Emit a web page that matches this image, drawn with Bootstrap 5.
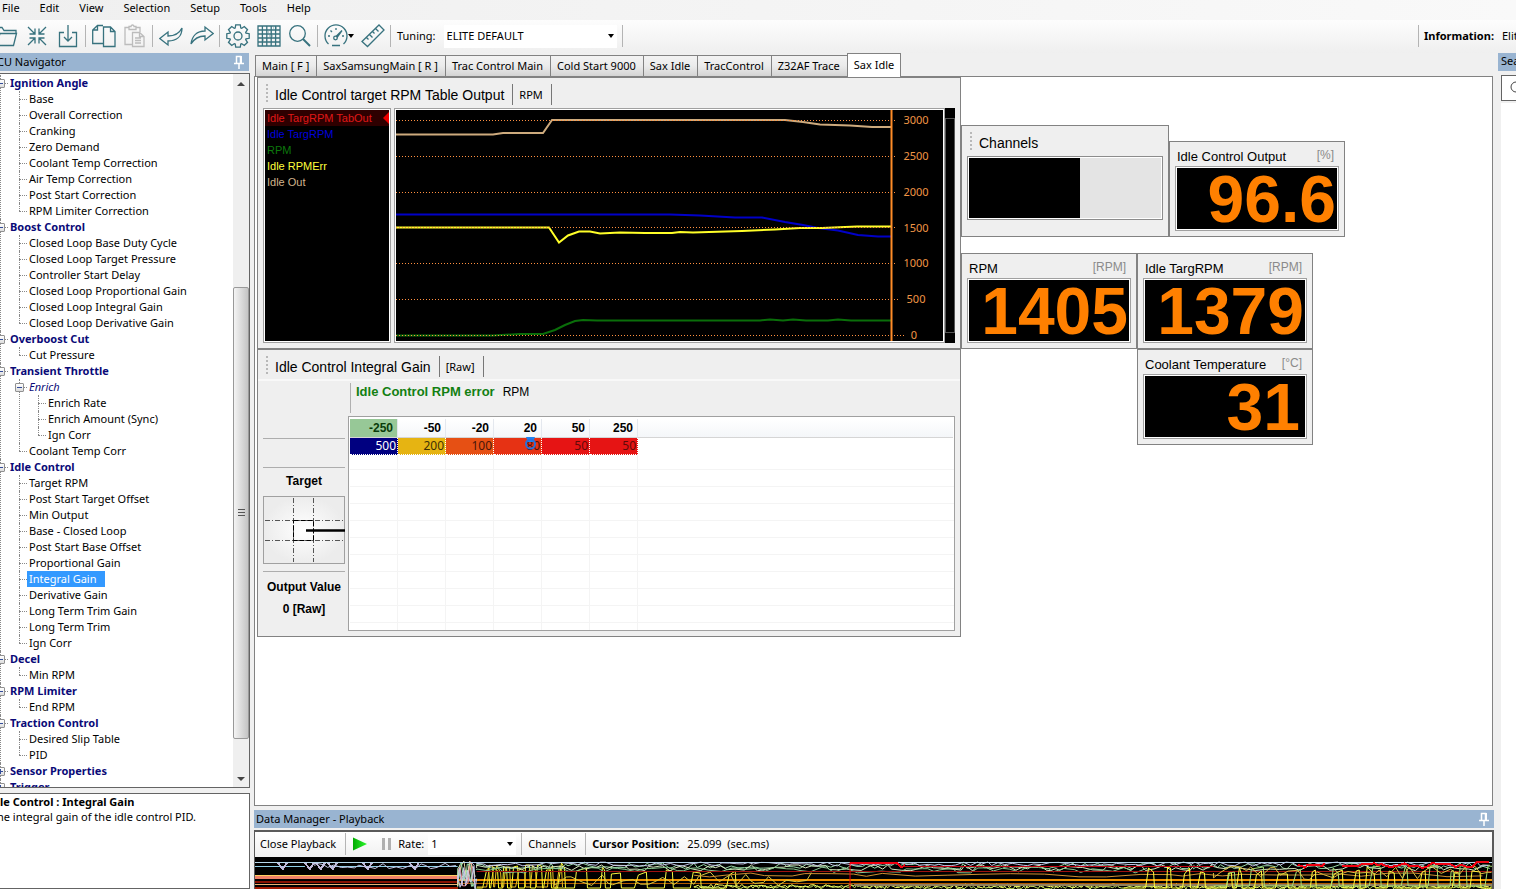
<!DOCTYPE html>
<html lang="en">
<head>
<meta charset="utf-8">
<meta name="viewport" content="width=device-width, initial-scale=1">
<title>ECU Tuning - Sax Idle</title>
<link rel="stylesheet" href="https://cdn.jsdelivr.net/npm/bootstrap@5.3.0/dist/css/bootstrap.min.css">
<style>
:root { --ui: "Noto Sans", "Open Sans", sans-serif; --gauge: "Liberation Sans", Arial, sans-serif; --edge: #828282; --face: #efefef; --teal: #37727e; --caption: #99b4d1; }
body { font: 11px/16px var(--ui); color: #000; background: #f0f0f0; height: 100vh; overflow: hidden; }
button, select, input { font: inherit; color: inherit; background: none; border: 0; padding: 0; border-radius: 0; appearance: none; }
a { color: inherit; text-decoration: none; }
svg { display: block; }
.ic { width: 24px; height: 24px; fill: none; stroke: var(--teal); stroke-width: 1.3; }
.menubar { height: 20px; gap: 20px; padding-left: 2px; line-height: 16px; background: linear-gradient(90deg, #efefef, #f9f9f9); }
.toolstrip { height: 33px; background: linear-gradient(#fdfdfd, #efefef); }
.main-tools { padding-bottom: 1px; }
.tool-group { gap: 7px; }
.tool-group:first-child { margin-left: -6px; }
.vsep { flex: none; width: 1px; height: 22px; background: #b4b4b4; margin: 0 6px 0 5px; }
.pick { background: #fff; position: relative; }
.pick select { width: 100%; height: 100%; padding-left: 3px; background: #fff; }
.pick::after, .caret { content: ""; border: 3px solid transparent; border-top: 4px solid #000; border-bottom: 0; }
.pick::after { position: absolute; right: 3px; top: 50%; margin-top: -2px; pointer-events: none; }
.info { width: 98px; white-space: nowrap; }
.info .vsep { margin: 0 5px 0 0; }
.info b, .info span { flex: none; }
.caption-bar { background: var(--caption); height: 18px; white-space: nowrap; }
.nav-col { width: 250px; }
.nav-col .caption-bar { margin-right: 1px; }
.crop-left { margin-left: -3px; }
.framed { background: #fff; border: 1px solid #646464; }
.nav-col .framed { border-left: 0; }
.tree-view ul { list-style: none; margin: 0 0 0 9px; padding: 0; }
.tree-view > ul { margin: 0 0 0 0; padding-top: 1px; }
.tree-view li { position: relative; padding-left: 10px; line-height: 16px; white-space: nowrap; }
.tree-view li::before { content: ""; position: absolute; left: 0; top: 8px; width: 8px; border-top: 1px dotted #888; }
.tree-view li::after { content: ""; position: absolute; left: 0; top: 0; bottom: 0; border-left: 1px dotted #888; }
.tree-view li li:last-child::after { bottom: auto; height: 8px; }
.tree-view .grp { font-weight: 700; color: #0a0a78; }
.tree-view .sub { font-style: italic; color: #0a0a78; }
.tree-view .sel { background: #39f; color: #fff; margin-left: -2px; padding: 0 9px 0 2px; display: inline-block; }
.box { position: absolute; z-index: 1; left: -4px; top: 4px; width: 9px; height: 9px; border: 1px solid #919191; background: linear-gradient(#fff, #ddd); border-radius: 1px; }
.box::before { content: ""; position: absolute; left: 1px; right: 1px; top: 3px; height: 1px; background: #334c99; }
.box.plus::after { content: ""; position: absolute; top: 1px; bottom: 1px; left: 3px; width: 1px; background: #334c99; }
.scrollbar { width: 16px; background: #efefef; }
.scrollbar i { border: 4px solid transparent; margin: 8px 0 0 4px; width: 8px; }
.scrollbar .up { border-bottom-color: #444; border-top: 0; }
.scrollbar .down { border-top-color: #444; border-bottom: 0; margin: 0 0 6px 4px; }
.scrollbar .above { flex: 201; }
.scrollbar .thumb { flex: 450; border: 1px solid #999; border-radius: 2px; background: linear-gradient(90deg, #f4f4f4, #dcdcdc 50%, #c4c4c4); }
.scrollbar .below { flex: 38; }
.grip-lines { width: 7px; height: 8px; background: repeating-linear-gradient(#555 0 1px, transparent 1px 3px); }
.descr { height: 96px; margin-top: 5px; line-height: 15px; white-space: nowrap; }
.center-col { margin-left: 4px; margin-right: 4px; }
.tabrow { height: 23px; padding-left: 1px; }
.tabrow button { height: 21px; padding: 0 7px 0 6px; white-space: nowrap; border: 1px solid var(--edge); border-width: 1px 0 0 1px; background: linear-gradient(#f3f3f3, #ebebeb 50%, #d4d4d4); }
.tabrow button.active { height: 24px; padding: 0 6px 2px; margin-bottom: -1px; border-width: 1px 1px 0; background: #fff; position: relative; }
.desk { border: 1px solid var(--edge); background: #fff; padding-left: 2px; margin-right: 1px; }
.left-stack { width: 704px; }
.pane { border: 1px solid var(--edge); background: var(--face); }
.pane-head { height: 30px; padding: 6px 0 0 8px; font: 14px/22px var(--gauge); }
.pane-head small { font: 11px/22px var(--ui); }
.dots { width: 2px; height: 18px; margin-right: 7px; background: repeating-linear-gradient(#b8b8b8 0 2px, transparent 2px 4px); }
.pane-head .bar { width: 1px; height: 21px; background: #777; margin: 0 6px 0 8px; }
.chart-body { padding: 0 5px 5px; height: 240px; }
.well { border: 1px solid #a0a0a0; background: #000; box-shadow: inset 0 0 0 1px #fff; }
.legend-box { width: 128px; margin-right: 3px; padding: 1px; font: 11px/16px var(--gauge); }
.legend-box div { padding-left: 2px; }
.legend-box .current { background: #2e0000; position: relative; }
.legend-box .current::after { content: ""; position: absolute; right: 0; top: 2px; border: 6px solid transparent; border-right-color: #e00; border-left: 0; }
.plot-box { padding: 1px; }
.range { width: 10px; background: #000; padding: 10px 0; }
.range div { border: 1px solid #555; height: 100%; }
.gain { height: 288px; }
.gain .pane-head { height: 29px; margin-right: 5px; }
.gain-body { padding: 0 5px; border-top: 2px solid #f8f8f8; }
.side { width: 82px; margin-right: 3px; font: bold 12px/18px var(--gauge); text-align: center; }
.side hr { margin: 0; border: 0; border-top: 1px solid #adadad; opacity: 1; }
.axis { height: 35px; padding: 2px 0 0 2px; }
.axis b { font: bold 13px/18px var(--gauge); color: #128012; }
.axis .bar { width: 1px; height: 30px; background: #b0b0b0; margin-right: 5px; }
.axis span { font: 12px/18px var(--gauge); }
.sheet { height: 215px; border: 1px solid #a0a0a0; background: #fff; padding: 2px 1px; position: relative; }
.lines { position: absolute; inset: 36px 0 0 1px; background: repeating-linear-gradient(90deg, transparent 0 47px, #f4f4f4 47px 48px) 0 0 / 288px 100% no-repeat, repeating-linear-gradient(transparent 0 16px, #f4f4f4 16px 17px); }
.head-band { position: absolute; left: 1px; right: 1px; top: 2px; height: 19px; background: linear-gradient(#fff, #f4f6f9); border-bottom: 1px solid #d5d5d5; }
.cells { position: relative; width: 288px; table-layout: fixed; border-collapse: separate; border-spacing: 0; text-align: right; }
.cells th { height: 19px; padding: 0 4px 0 0; font: bold 12px/18px var(--gauge); border-right: 1px solid #e4e8ee; border-bottom: 1px solid #d5d5d5; }
.cells th.hit { background: #97c897; color: #0a3c0a; }
.cells td { height: 17px; padding: 0 1px 0 0; font: 12px/16px var(--ui); border: 1px dotted #fff; border-width: 0 1px 1px 0; }
.cells .c1 { background: #000080; color: #fff; } .cells .c2 { background: #e6b412; color: #3d3004; } .cells .c3 { background: #e65014; color: #47160a; } .cells .c4 { background: #e63214; color: #47100a; } .cells .c5 { background: #e61414; color: #5e0a0a; }
.marker { position: absolute; left: 176px; top: 18px; }
.gauges { padding-top: 48px; }
.bar-pane { width: 208px; height: 112px; }
.bar-well { margin: 0 5px; height: 64px; border: 1px solid #8c8c8c; background: #fff; padding: 1px; }
.bar-well div { height: 100%; background: #e4e4e4; }
.bar-well i { display: block; height: 100%; background: #000; }
.gauge { width: 176px; height: 96px; padding: 5px 5px 0; }
.gauge header { height: 19px; font: 13px/19px var(--gauge); padding: 0 5px 0 2px; white-space: nowrap; }
.gauge header span { font-size: 12px; line-height: 17px; color: #8a8a8a; }
.gauge .well { height: 65px; padding-right: 2px; font: bold 66px/64px var(--gauge); color: #ff8000; text-align: right; }
.gauge .well.inset-digit { padding-right: 6px; }
.offset-1g { margin-left: 176px; }
.dm { margin-top: 4px; }
.dm .caption-bar { padding-left: 2px; }
.dm-frame { margin-top: 2px; border: 2px solid #5a5a5a; border-width: 2px 2px 0 1px; height: 59px; background: #000; }
.dm .toolstrip { height: 25px; padding: 0 0 1px 5px; white-space: nowrap; background: linear-gradient(#fff, #f0f0f0); }
.dm .toolstrip > button { padding-right: 4px; }
.right-col { width: 18px; }
.right-col .caption-bar { padding-left: 3px; }
.search-box { width: 160px; height: 26px; margin: 4px 0 0 3px; }
.results { width: 160px; margin: 2px 0 0 3px; background: #fff; }
</style>
</head>
<body class="d-flex flex-column">

<nav class="menubar d-flex flex-shrink-0" aria-label="Main menu">
  <a href="#">File</a><a href="#">Edit</a><a href="#">View</a><a href="#">Selection</a><a href="#">Setup</a><a href="#">Tools</a><a href="#">Help</a>
</nav>

<div class="toolstrip main-tools d-flex align-items-center flex-shrink-0">
  <div class="tool-group d-flex">
    <button aria-label="Open"><svg class="ic" viewBox="0 0 24 24"><path d="M1 21.500V3.500h7l2 3h12v3M1 21.500h18.500l3-12H6l-3.500 12"/></svg></button>
    <button aria-label="Collapse"><svg class="ic" viewBox="0 0 24 24"><path d="M3 3l7 7M4.500 10H10V4.500M21 3l-7 7M14 4.500V10h5.500M3 21l7-7M4.500 14H10v5.500M21 21l-7-7M19.500 14H14v5.500"/></svg></button>
    <button aria-label="Download"><svg class="ic" viewBox="0 0 24 24"><path d="M8 8.500H3.500v14h17v-14H16M12 1v16M8 13l4 4 4-4"/></svg></button>
  </div>
  <div class="vsep"></div>
  <div class="tool-group d-flex">
    <button aria-label="Copy"><svg class="ic" viewBox="0 0 24 24"><path d="M11 19.500H.700V6L5.500 1.500H11M5.500 1.500V6H.700M11.500 3h7l4.500 4.500v15H11.500zM18.500 3v4.500H23"/></svg></button>
    <button aria-label="Paste"><svg class="ic" style="stroke:#bcbcbc" viewBox="0 0 24 24"><path d="M9 20.500H2V3.500h4M13 3.500h4V8M6 5.500h7V2.500h-2a1.500 1.500 0 0 0-3 0H6zM9.500 8.500h7l4.500 4v10H9.500zM16.500 8.500v4H21M12 14h6M12 16.500h6M12 19h6"/></svg></button>
  </div>
  <div class="vsep"></div>
  <div class="tool-group d-flex">
    <button aria-label="Undo"><svg class="ic" viewBox="0 0 24 24"><path d="M.800 14.500L9 8v4c6 0 11-2 14-8 0 9-6 13-14 13v4z"/></svg></button>
    <button aria-label="Redo"><svg class="ic" viewBox="0 0 24 24"><path d="M23.200 9.500L15 3v4C7 7 2 12 1 20c3-5 8-8 14-8v4z"/></svg></button>
  </div>
  <div class="vsep"></div>
  <div class="tool-group d-flex">
    <button aria-label="Settings"><svg class="ic" viewBox="0 0 24 24"><path id="cog"/><circle cx="12" cy="12" r="4"/></svg></button>
    <button aria-label="Table"><svg class="ic" viewBox="0 0 24 24"><path d="M1 2h22v20H1zM1 6h22M1 10h22M1 14h22M1 18h22M5.400 2v20M9.800 2v20M14.200 2v20M18.600 2v20"/><path stroke-opacity=".35" stroke-width="2" stroke-dasharray="1 2" d="M11 8h6M16 4h5M6 16h6M12 12h6"/></svg></button>
    <button aria-label="Search"><svg class="ic" viewBox="0 0 24 24"><circle cx="9.500" cy="9.500" r="7.800"/><path stroke-width="2" d="M15 15l7 7"/></svg></button>
  </div>
  <div class="vsep"></div>
  <div class="tool-group d-flex">
    <button class="d-flex align-items-center" aria-label="Gauges"><svg class="ic" viewBox="0 0 24 24"><path d="M4.500 20A11 11 0 1 1 19.500 20M8 21.500h8M4 12h2M6.500 6.500l1.500 1.500M12 4v2M20 12h-2M12 12.500l6-6-5 7"/><circle cx="11.500" cy="14" r="1.800"/></svg><span class="caret"></span></button>
    <button aria-label="Measure"><svg class="ic" viewBox="0 0 24 24"><path d="M1 17.500L18 1l5 5L6.500 22.500zM5.500 13.500l2 2M8.500 10.500l3 3M11.500 7.500l2 2M14.500 4.500l3 3"/></svg></button>
  </div>
  <div class="vsep"></div>
  <label for="tuning">Tuning:</label>
  <div class="pick ms-2" style="width:173px;height:23px"><select id="tuning"><option>ELITE DEFAULT</option></select></div>
  <div class="vsep"></div>
  <div class="info ms-auto d-flex align-items-center overflow-hidden"><div class="vsep"></div><b>Information:</b><span class="ms-2">Elite</span></div>
</div>

<main class="d-flex flex-grow-1" style="min-height:0">

  <aside class="nav-col d-flex flex-column flex-shrink-0 overflow-hidden">
    <div class="caption-bar d-flex justify-content-between align-items-center flex-shrink-0"><span class="crop-left">CU Navigator</span>
      <button aria-label="Pin" class="me-1"><svg width="12" height="14" fill="none" stroke="#fff" stroke-width="1.500"><path d="M3.500 8.500v-7h4v7M1 8.500h10M6 9v5"/><path stroke-width="2" d="M8 1v7"/></svg></button></div>
    <div class="framed d-flex flex-grow-1 overflow-hidden" style="margin-top:2px">
      <div class="tree-view flex-grow-1">
        <ul>
          <li><button class="box" aria-label="Collapse"></button><span class="grp">Ignition Angle</span>
            <ul><li>Base</li><li>Overall Correction</li><li>Cranking</li><li>Zero Demand</li><li>Coolant Temp Correction</li><li>Air Temp Correction</li><li>Post Start Correction</li><li>RPM Limiter Correction</li></ul></li>
          <li><button class="box" aria-label="Collapse"></button><span class="grp">Boost Control</span>
            <ul><li>Closed Loop Base Duty Cycle</li><li>Closed Loop Target Pressure</li><li>Controller Start Delay</li><li>Closed Loop Proportional Gain</li><li>Closed Loop Integral Gain</li><li>Closed Loop Derivative Gain</li></ul></li>
          <li><button class="box" aria-label="Collapse"></button><span class="grp">Overboost Cut</span>
            <ul><li>Cut Pressure</li></ul></li>
          <li><button class="box" aria-label="Collapse"></button><span class="grp">Transient Throttle</span>
            <ul><li><button class="box" aria-label="Collapse"></button><span class="sub">Enrich</span><ul><li>Enrich Rate</li><li>Enrich Amount (Sync)</li><li>Ign Corr</li></ul></li><li>Coolant Temp Corr</li></ul></li>
          <li><button class="box" aria-label="Collapse"></button><span class="grp">Idle Control</span>
            <ul><li>Target RPM</li><li>Post Start Target Offset</li><li>Min Output</li><li>Base - Closed Loop</li><li>Post Start Base Offset</li><li>Proportional Gain</li><li class="d-flex"><span class="sel">Integral Gain</span></li><li>Derivative Gain</li><li>Long Term Trim Gain</li><li>Long Term Trim</li><li>Ign Corr</li></ul></li>
          <li><button class="box" aria-label="Collapse"></button><span class="grp">Decel</span><ul><li>Min RPM</li></ul></li>
          <li><button class="box" aria-label="Collapse"></button><span class="grp">RPM Limiter</span><ul><li>End RPM</li></ul></li>
          <li><button class="box" aria-label="Collapse"></button><span class="grp">Traction Control</span><ul><li>Desired Slip Table</li><li>PID</li></ul></li>
          <li><button class="box plus" aria-label="Expand"></button><span class="grp">Sensor Properties</span></li>
          <li><button class="box plus" aria-label="Expand"></button><span class="grp">Trigger</span></li>
        </ul>
      </div>
      <div class="scrollbar d-flex flex-column flex-shrink-0"><i class="up"></i><div class="above"></div><div class="thumb d-flex align-items-center justify-content-center"><div class="grip-lines"></div></div><div class="below"></div><i class="down"></i></div>
    </div>
    <div class="framed descr flex-shrink-0 overflow-hidden"><b class="d-block">le Control : Integral Gain</b><span class="d-block crop-left">he integral gain of the idle control PID.</span></div>
  </aside>

  <section class="center-col d-flex flex-column flex-grow-1" style="min-width:0">
    <div class="tabrow d-flex align-items-end flex-shrink-0">
      <button>Main [ F ]</button><button>SaxSamsungMain [ R ]</button><button>Trac Control Main</button><button>Cold Start 9000</button><button>Sax Idle</button><button>TracControl</button><button>Z32AF Trace</button><button class="active">Sax Idle</button>
    </div>
    <div class="desk d-flex flex-grow-1 overflow-hidden">
      <div class="left-stack flex-shrink-0">
        <section class="pane">
          <div class="pane-head d-flex"><div class="dots"></div>Idle Control target RPM Table Output<div class="bar"></div><small>RPM</small><div class="bar"></div></div>
          <div class="chart-body d-flex">
            <div class="well legend-box">
              <div class="current" style="color:#e01818">Idle TargRPM TabOut</div><div style="color:#0000dc">Idle TargRPM</div><div style="color:#0c780c">RPM</div><div style="color:#ffff3c">Idle RPMErr</div><div style="color:#d2b48c">Idle Out</div>
            </div>
            <div class="well plot-box flex-grow-1"><svg id="chart" width="100%" height="100%" viewBox="396 110 547 231" preserveAspectRatio="none" fill="none" stroke-width="2">
              <path stroke="#cdaa7d" d="M396 134.500h97l10-1.500h40l9-13h233l18 2 17 2.500 30 1 22 1.500h19"/>
              <path stroke="#0000c8" d="M396 214.500h274l30 1 35 2h27l23 4.500 18 3 15 3 20 2.500 20 4.500 20 1.500h13"/>
              <path stroke="#ffff28" d="M396 227.500h153l10 15 9-7 11-4h11l10 2 20-1 25 .500h27l8-1 13 .500 49-1.500 33-1.500 25-1.500h22l35-1.500h34"/>
              <path stroke="#0a6e0a" d="M396 335.500h97l27-1.500h23l12-4 10-5 10-4 8-1 14 .500h163l10-1 13 1 10-1 13 1h22l10-1 13 1h40"/>
              <path d="M891.500 110v231" stroke="#ff8c28"/>
              <g stroke="#ff9040" stroke-width="1" stroke-dasharray="1 2"><path d="M396 120.500h501M396 156.500h501M396 192.500h501M396 227.500h501M396 263.500h501M396 299.500h503M396 335.500h508"/></g>
              <g fill="#f09646" stroke="none" font-family="Noto Sans, sans-serif" font-size="11" text-anchor="middle"><text x="916" y="124">3000</text><text x="916" y="160">2500</text><text x="916" y="196">2000</text><text x="916" y="232">1500</text><text x="916" y="267">1000</text><text x="916" y="303">500</text><text x="914" y="339">0</text></g>
            </svg></div>
            <div class="range"><div></div></div>
          </div>
        </section>

        <section class="pane gain">
          <div class="pane-head d-flex"><div class="dots"></div>Idle Control Integral Gain<div class="bar"></div><small>[Raw]</small><div class="bar"></div></div>
          <div class="gain-body d-flex">
            <div class="side">
              <hr style="margin-top:57px"><hr style="margin-top:28px">
              <div class="mt-1">Target</div>
              <svg style="margin-top:6px" width="82" height="68"><defs><radialGradient id="glow"><stop offset="0" stop-color="#fff"/><stop offset="1" stop-color="#ececec"/></radialGradient></defs><rect x=".500" y=".500" width="81" height="67" fill="url(#glow)" stroke="#a0a0a0"/><path d="M30.500 2v64M50.500 2v64M2 24.500h78M2 44.500h78" stroke="#555" stroke-dasharray="5 2 1 2" fill="none"/><path d="M30.500 24.500h20v20h-20z" fill="none" stroke="#000" stroke-dasharray="5 2"/><path d="M43 34.500h39" stroke="#000" stroke-width="2.500"/></svg>
              <hr style="margin-top:7px">
              <div style="margin-top:6px">Output Value</div><div class="mt-1">0 [Raw]</div>
            </div>
            <div class="flex-grow-1">
              <div class="axis d-flex"><div class="bar"></div><b>Idle Control RPM error</b><span class="ms-2">RPM</span></div>
              <div class="sheet">
                <div class="head-band"></div><div class="lines"></div>
                <table class="cells">
                  <thead><tr><th class="hit">-250</th><th>-50</th><th>-20</th><th>20</th><th>50</th><th>250</th></tr></thead>
                  <tbody><tr><td class="c1">500</td><td class="c2">200</td><td class="c3">100</td><td class="c4">80</td><td class="c5">50</td><td class="c5">50</td></tr></tbody>
                </table>
                <svg class="marker" width="12" height="16"><path d="M1 2h9l-2 5-5 0z" fill="#1e82f0"/><circle cx="5.500" cy="9" r="4.500" fill="none" stroke="#2a70d8" stroke-width="2"/></svg>
              </div>
            </div>
          </div>
        </section>
      </div>

      <div class="gauges">
        <div class="d-flex align-items-end">
          <section class="pane bar-pane"><div class="pane-head d-flex"><div class="dots"></div>Channels</div><div class="bar-well"><div><i style="width:58%"></i></div></div></section>
          <section class="pane gauge"><header class="d-flex justify-content-between">Idle Control Output<span>[%]</span></header><div class="well">96.6</div></section>
        </div>
        <div class="d-flex mt-3">
          <section class="pane gauge"><header class="d-flex justify-content-between">RPM<span>[RPM]</span></header><div class="well">1405</div></section>
          <section class="pane gauge"><header class="d-flex justify-content-between">Idle TargRPM<span>[RPM]</span></header><div class="well">1379</div></section>
        </div>
        <section class="pane gauge offset-1g"><header class="d-flex justify-content-between">Coolant Temperature<span>[°C]</span></header><div class="well inset-digit">31</div></section>
      </div>
    </div>

    <section class="dm flex-shrink-0">
      <div class="caption-bar d-flex justify-content-between align-items-center">Data Manager - Playback
        <button aria-label="Pin" class="me-1"><svg width="12" height="14" fill="none" stroke="#fff" stroke-width="1.500"><path d="M3.500 8.500v-7h4v7M1 8.500h10M6 9v5"/><path stroke-width="2" d="M8 1v7"/></svg></button></div>
      <div class="dm-frame overflow-hidden">
        <div class="toolstrip d-flex align-items-center">
          <button>Close Playback</button><div class="vsep"></div>
          <button aria-label="Play" class="me-2"><svg width="16" height="16"><defs><linearGradient id="go" x1="0" x2="1"><stop offset="0" stop-color="#0a0"/><stop offset="1" stop-color="#2df82d"/></linearGradient></defs><path d="M1 1.500l14 6.500-14 6.500z" fill="url(#go)"/></svg></button>
          <button aria-label="Pause"><svg width="14" height="14" fill="#b0b0b0"><path d="M2 1h3v12H2zM8 1h3v12H8z"/></svg></button>
          <label for="rate">Rate:</label>
          <div class="pick ms-1" style="width:88px;height:22px"><select id="rate"><option>1</option></select></div>
          <div class="vsep"></div><button>Channels</button><div class="vsep"></div>
          <b>Cursor Position:</b><span class="ms-2">25.099&nbsp; (sec.ms)</span>
        </div>
        <svg id="trace" width="100%" height="32" viewBox="0 0 1239 32" preserveAspectRatio="none" fill="none" shape-rendering="crispEdges"></svg>
      </div>
    </section>
  </section>

  <aside class="right-col d-flex flex-column flex-shrink-0 overflow-hidden">
    <div class="caption-bar flex-shrink-0">Search</div>
    <div class="framed search-box d-flex align-items-center ps-2 flex-shrink-0"><svg width="12" height="14" fill="none" stroke="#444"><circle cx="6" cy="6" r="5"/><path d="M9 10l3 3"/></svg><input type="search" aria-label="Search" class="flex-grow-1" style="min-width:0"></div>
    <div class="results flex-grow-1"></div>
  </aside>
</main>

<script src="https://cdn.jsdelivr.net/npm/bootstrap@5.3.0/dist/js/bootstrap.bundle.min.js"></script>
<script>
// Cog outline: eight teeth around a circle
(function () {
  let d = '';
  for (let i = 0; i < 8; i++) [[-.34, 8.5], [-.2, 11.4], [.2, 11.4], [.34, 8.5]].forEach(function (p) {
    const a = i * Math.PI / 4 + p[0];
    d += (d ? 'L' : 'M') + (12 + p[1] * Math.sin(a)).toFixed(1) + ' ' + (12 - p[1] * Math.cos(a)).toFixed(1);
  });
  document.getElementById('cog').setAttribute('d', d + 'z');
})();

// Logged channel traces for the playback overview
(function () {
  let seed = 7, out = '';
  const rnd = () => (seed = (seed * 16807) % 2147483647) / 2147483647;
  const add = (d, c, w) => { out += '<path d="' + d + '" stroke="' + c + '" stroke-width="' + (w || 1) + '"/>'; };
  const flat = (x1, x2, y, c, w) => add('M' + x1 + ' ' + y + 'H' + x2, c, w);
  const noise = (x1, x2, y, amp, step, c, w) => {
    let d = 'M' + x1 + ' ' + y;
    for (let x = x1; x <= x2; x += step * (.5 + rnd())) d += 'L' + x.toFixed(1) + ' ' + (y + (rnd() - .5) * 2 * amp).toFixed(1);
    add(d, c, w);
  };
  const square = (x1, x2, hi, lo, gap, c) => {
    let d = 'M' + x1 + ' ' + lo, x = x1;
    while (x < x2) { x += gap * (.2 + rnd() * 1.6); d += 'L' + x.toFixed(0) + ' ' + lo; x += 1 + rnd() * 3; d += 'L' + x.toFixed(0) + ' ' + (hi + rnd() * 8).toFixed(0); x += 2 + rnd() * gap * .5; d += 'L' + x.toFixed(0) + ' ' + (hi + rnd() * 8).toFixed(0) + 'L' + (x + 1).toFixed(0) + ' ' + lo; }
    add(d, c);
  };
  flat(0, 203, 20.5, '#f08068', 3); flat(0, 203, 18.5, '#ffd060', 1); flat(0, 203, 24.5, '#8a1000', 2); flat(0, 203, 27.5, '#f0b070'); flat(0, 203, 30.5, '#a01800', 2);
  flat(0, 50, 9.5, '#90d0e8'); flat(75, 203, 9.5, '#90d0e8');
  [28, 55, 66, 78, 113, 160].forEach(x => add('M' + (x - 5) + ' 6l5 6 4-6', '#c0b8d8', 2));
  noise(60, 203, 9, 3, 6, '#c8c8e8');
  flat(203, 1239, 22.5, '#f09000', 2); flat(203, 1239, 26.5, '#b05a00');
  for (let i = 0; i < 6; i++) noise(203, 222, 18, 14, 2, ['#9fe8b0', '#c8c8e8', '#ff9090', '#e0d8a0'][i % 4]);
  square(222, 310, 6, 31, 5, '#ffff30'); square(222, 300, 8, 30, 7, '#e8c020');
  square(300, 470, 10, 31, 16, '#f8f840'); noise(300, 560, 22, 7, 8, '#d8c840');
  noise(222, 1239, 9, 3, 5, '#98d8a8'); noise(222, 1239, 11, 3, 7, '#d8e8c0'); noise(222, 1239, 7, 2, 6, '#c8c8e8');
  noise(222, 900, 13, 3, 9, '#88c890'); flat(222, 1239, 14.5, '#a01010');
  noise(440, 1239, 29, 2, 3, '#ffff60'); noise(440, 1239, 30, 2, 2, '#c8e860'); flat(600, 1239, 27.5, '#908060', 2);
  noise(440, 1239, 18, 2, 24, '#d09030');
  square(870, 1239, 10, 31, 16, '#ffff40'); square(960, 1239, 8, 29, 22, '#a8e070'); noise(960, 1239, 16, 7, 7, '#e0c040');
  flat(0, 1239, 5.500, '#b8d8ec');
  add('M596 32V5.500', '#f00010'); add('M596 5.500H642l6 5 3-3', '#f00010', 2); flat(650, 960, 9.5, '#c00010');
  noise(1045, 1072, 8, 3, 4, '#f00010', 2); noise(1090, 1239, 8, 3, 6, '#f00010', 2);
  document.getElementById('trace').innerHTML = out;
})();
</script>
</body>
</html>
